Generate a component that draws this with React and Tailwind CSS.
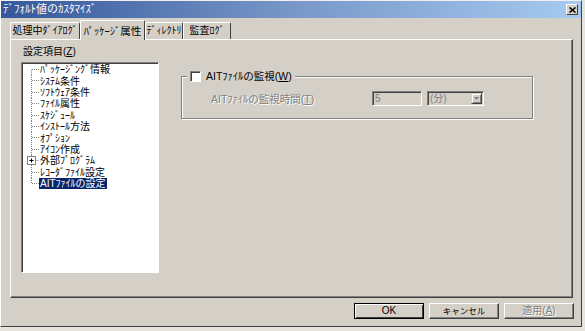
import React from "react";

const items = [
  "ﾊﾟｯｹｰｼﾞﾝｸﾞ情報",
  "ｼｽﾃﾑ条件",
  "ｿﾌﾄｳｪｱ条件",
  "ﾌｧｲﾙ属性",
  "ｽｹｼﾞｭｰﾙ",
  "ｲﾝｽﾄｰﾙ方法",
  "ｵﾌﾟｼｮﾝ",
  "ｱｲｺﾝ作成",
  "外部ﾌﾟﾛｸﾞﾗﾑ",
  "ﾚｺｰﾀﾞﾌｧｲﾙ設定",
  "AITﾌｧｲﾙの設定",
];

const TreeLine = ({ first, last, plus }) => (
  <svg width="17" height="11.4" viewBox="0 0 17 11.4" className="shrink-0">
    <line
      x1="9.5"
      y1={first ? 5.7 : 0}
      x2="9.5"
      y2={last ? 5.7 : 11.4}
      stroke="#808080"
      strokeDasharray="1 1"
    />
    <line x1={plus ? 13.5 : 10} y1="5.5" x2="17" y2="5.5" stroke="#808080" strokeDasharray="1 1" />
    {plus && (
      <>
        <rect x="5.5" y="1.5" width="8" height="8" fill="#fff" stroke="#808080" />
        <line x1="7.5" y1="5.5" x2="11.5" y2="5.5" stroke="#000" />
        <line x1="9.5" y1="3.5" x2="9.5" y2="7.5" stroke="#000" />
      </>
    )}
  </svg>
);

const Tab = ({ label, w, active }) => (
  <div
    className={
      "flex items-center justify-center border-t border-l border-white border-r border-r-[#404040] rounded-t-[2px] bg-[#d4d0c8] " +
      (active ? "h-[20px] mb-[-1px] relative z-10 text-[10.5px]" : "h-[17px]")
    }
    style={{ width: w }}>
    <span className="leading-[12px]">{label}</span>
  </div>
);

const Button = ({ children, isDefault, disabled }) => (
  <div
    className={
      "w-[70px] h-[16px] flex items-center justify-center bg-[#d4d0c8] " +
      (isDefault
        ? "border border-black shadow-[inset_1px_1px_0_#fff,inset_-1px_-1px_0_#404040]"
        : "border border-t-white border-l-white border-r-[#404040] border-b-[#404040] shadow-[inset_-1px_-1px_0_#808080]")
    }>
    <span className={"leading-[12px] " + (disabled ? "text-[#808080] [text-shadow:1px_1px_0_#fff]" : "text-black")}>
      {children}
    </span>
  </div>
);

export default function App() {
  return (
    <div className="w-[585px] h-[331px] bg-[#e6e4de] overflow-hidden font-['Liberation_Sans','Noto_Sans_CJK_JP',sans-serif] text-[10px] text-black">
      <div className="w-[582px] h-[327px] bg-[#d4d0c8] border border-t-[#f0f0f0] border-l-white border-r-[#404040] border-b-[#404040] flex flex-col">
        {/* title bar */}
        <div className="h-[17px] shrink-0 bg-gradient-to-r from-[#36579a] via-[#7897c8] to-[#a6caf0] flex items-center justify-between pl-[2px] pr-[3px]">
          <span className="text-white text-[11px] leading-[13px]">ﾃﾞﾌｫﾙﾄ値のｶｽﾀﾏｲｽﾞ</span>
          <div className="w-[12px] h-[11px] bg-[#d4d0c8] border border-t-white border-l-white border-r-[#404040] border-b-[#404040] flex items-center justify-center">
            <svg width="7" height="6" viewBox="0 0 7 6">
              <path d="M0.5 0.5 L6.5 5.5 M6.5 0.5 L0.5 5.5" stroke="#000" strokeWidth="1.6" />
            </svg>
          </div>
        </div>

        {/* tabs */}
        <div className="mt-[2px] h-[19px] shrink-0 flex items-end pl-[9px]">
          <Tab label="処理中ﾀﾞｲｱﾛｸﾞ" w={70} />
          <Tab label="ﾊﾟｯｹｰｼﾞ属性" w={65} active />
          <Tab label="ﾃﾞｨﾚｸﾄﾘ" w={38} />
          <Tab label="監査ﾛｸﾞ" w={48} />
        </div>

        {/* tab panel */}
        <div className="ml-[9px] w-[563px] h-[259px] shrink-0 border border-t-white border-l-white border-r-[#404040] border-b-[#404040] shadow-[inset_-1px_-1px_0_#808080] flex">
          <div className="ml-[10px] flex flex-col">
            <div className="mt-[5px] ml-[2px] h-[14px] leading-[14px]">
              設定項目(<u>Z</u>)
            </div>
            <div className="mt-[3px] w-[138px] h-[211px] bg-white border border-t-[#808080] border-l-[#808080] border-r-white border-b-white shadow-[inset_1px_1px_0_#404040] pt-[1px]">
              {items.map((it, i) => {
                const sel = i === items.length - 1;
                return (
                  <div key={it} className="h-[11.4px] flex items-center">
                    <TreeLine first={i === 0} last={sel} plus={i === 8} />
                    <span
                      className={
                        "px-px leading-[11px] whitespace-nowrap " +
                        (sel ? "bg-[#0a246a] text-white" : "")
                      }>
                      {it}
                    </span>
                  </div>
                );
              })}
            </div>
          </div>

          <div className="ml-[22px]">
            <div className="relative mt-[36px] w-[352px] h-[43px] border border-[#808080] shadow-[inset_1px_1px_0_#fff,1px_1px_0_#fff]">
              <div className="absolute top-[-7px] left-[5px] h-[12px] px-[3px] bg-[#d4d0c8] flex items-center gap-[5px]">
                <div className="w-[11px] h-[11px] bg-white border border-t-[#808080] border-l-[#808080] border-r-white border-b-white shadow-[inset_1px_1px_0_#404040]" />
                <span className="leading-[12px] text-[10.5px]">
                  AITﾌｧｲﾙの監視(<u>W</u>)
                </span>
              </div>
              <div className="mt-[14px] pl-[29px] flex items-center">
                <span className="w-[161px] leading-[12px] text-[10.5px] text-[#808080] [text-shadow:1px_1px_0_#fff]">
                  AITﾌｧｲﾙの監視時間(<u>T</u>)
                </span>
                <div className="w-[50px] h-[15px] bg-[#d4d0c8] border border-t-[#808080] border-l-[#808080] border-r-white border-b-white shadow-[inset_1px_1px_0_#404040] flex items-center pl-[2px]">
                  <span className="text-[#808080] leading-[11px]">5</span>
                </div>
                <div className="ml-[5px] w-[57px] h-[15px] bg-[#d4d0c8] border border-t-[#808080] border-l-[#808080] border-r-white border-b-white shadow-[inset_1px_1px_0_#404040] flex items-center justify-between pl-[2px] pr-px">
                  <span className="text-[#808080] leading-[11px]">(分)</span>
                  <div className="w-[11px] h-[11px] bg-[#d4d0c8] border border-t-[#d4d0c8] border-l-[#d4d0c8] border-r-[#404040] border-b-[#404040] shadow-[inset_1px_1px_0_#fff,inset_-1px_-1px_0_#808080] flex items-center justify-center">
                    <svg width="5" height="3" viewBox="0 0 5 3">
                      <path d="M0 0 H5 L2.5 3 Z" fill="#808080" />
                    </svg>
                  </div>
                </div>
              </div>
            </div>
          </div>
        </div>

        {/* buttons */}
        <div className="mt-[5px] flex justify-end gap-[5px] pr-[7px]">
          <Button isDefault>OK</Button>
          <Button>
            <span className="text-[8.5px]">キャンセル</span>
          </Button>
          <Button disabled>
            適用(<u>A</u>)
          </Button>
        </div>
      </div>
    </div>
  );
}
